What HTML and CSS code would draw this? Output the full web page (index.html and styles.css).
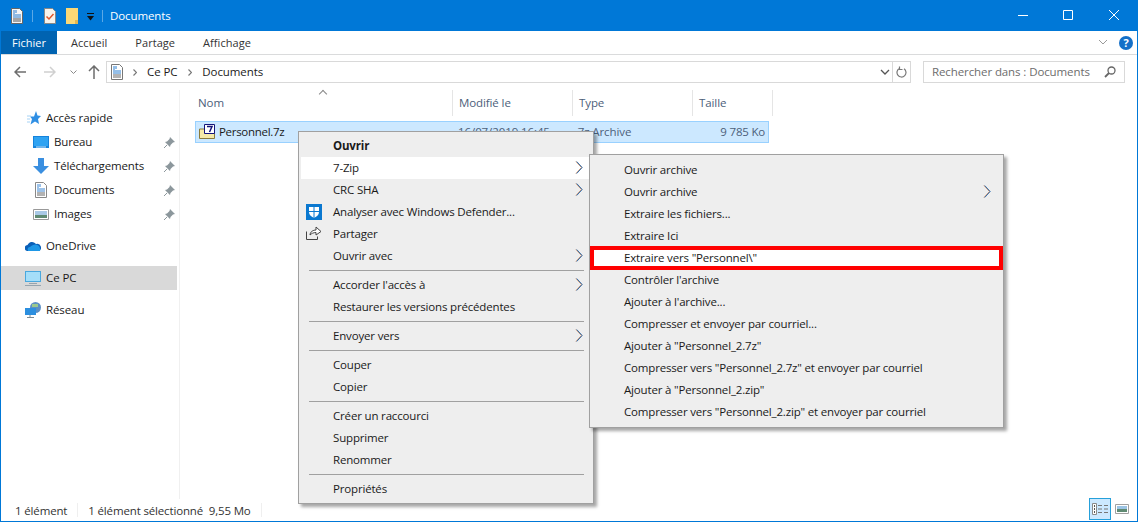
FILE: index.html
```html
<!DOCTYPE html>
<html lang="fr">
<head>
<meta charset="utf-8">
<title>Documents</title>
<link rel="stylesheet" href="styles.css">
</head>
<body>
<svg class="defs" width="0" height="0">
  <symbol id="chev" viewBox="0 0 8 13"><path d="M1 .5L6.500 6.500 1 12.500" fill="none" stroke="#d08a5c"/><path d="M1.700 .5L7.200 6.500 1.700 12.500" fill="none" stroke="#2f6fb0"/></symbol>
  <symbol id="pin" viewBox="0 0 11 11"><path d="M6 0l5 5-2 .5L6.500 8l-.5 2L1 5l2-.5L5.500 2z" fill="#8c979c"/><path d="M3 8L0 11" stroke="#8c979c"/></symbol>
</svg>
<div class="window">
  <header class="titlebar">
    <svg class="qa-doc" width="12" height="16" viewBox="0 0 12 16"><path d="M.5.500h8l3 3v12H.500z" fill="#f6f6f6" stroke="#666"/><path d="M2 3h2M5 2v3M2 5h2" stroke="#2a7fd0"/><path d="M2 7h8M2 9h8" stroke="#2a7fd0"/><path d="M2 11h8M2 13h8" stroke="#555"/></svg>
    <span class="qa-sep"></span>
    <svg class="qa-check" width="12" height="16" viewBox="0 0 12 16"><path d="M.5.500h8l3 3v12H.500z" fill="#f7f3ec" stroke="#888"/><path d="M2.500 8.500l2.500 2.500 4.500-5" fill="none" stroke="#e0562c" stroke-width="1.500"/></svg>
    <svg class="qa-folder" width="12" height="16" viewBox="0 0 12 16"><path d="M0 0h12v16H0z" fill="#fbd876"/><path d="M9 12h3v4H9z" fill="#e3b650"/></svg>
    <svg class="qa-caret" width="7" height="8" viewBox="0 0 7 8"><path d="M0 0h7v1H0z" fill="#111"/><path d="M0 3h7L3.500 7.500z" fill="#111"/></svg>
    <span class="qa-sep qa-sep-last"></span>
    <span class="title">Documents</span>
    <div class="winctl">
      <svg width="46" height="31" viewBox="0 0 46 31"><path d="M19 15.500h10" stroke="#fff"/></svg>
      <svg width="46" height="31" viewBox="0 0 46 31"><path d="M18.500 10.500h9v9h-9z" fill="none" stroke="#fff"/></svg>
      <svg width="46" height="31" viewBox="0 0 46 31"><path d="M18 10l10 10M28 10L18 20" stroke="#fff"/></svg>
    </div>
  </header>
  <nav class="ribbon">
    <span class="tab tab-file">Fichier</span>
    <span class="tab">Accueil</span>
    <span class="tab">Partage</span>
    <span class="tab">Affichage</span>
    <svg class="ribbon-chev" width="10" height="7" viewBox="0 0 10 7"><path d="M1 1l4 4 4-4" fill="none" stroke="#9a9a9a"/></svg>
    <span class="help">?</span>
  </nav>
  <div class="navbar">
    <svg width="12" height="12" viewBox="0 0 12 12"><path d="M6 1L1 6l5 5M1 6h11" fill="none" stroke="#6d6d6d" stroke-width="1.500"/></svg>
    <svg class="nav-fwd" width="12" height="12" viewBox="0 0 12 12"><path d="M6 1l5 5-5 5M11 6H0" fill="none" stroke="#d0d0d0" stroke-width="1.500"/></svg>
    <svg class="nav-down" width="7" height="5" viewBox="0 0 7 5"><path d="M.5 .5l3 3 3-3" fill="none" stroke="#8a8a8a"/></svg>
    <svg class="nav-up" width="12" height="14" viewBox="0 0 12 14"><path d="M1 6l5-5 5 5M6 1v13" fill="none" stroke="#6d6d6d" stroke-width="1.500"/></svg>
    <div class="address">
      <svg class="addr-doc" width="12" height="16" viewBox="0 0 12 16"><path d="M.5.500h8l3 3v12H.500z" fill="#fff" stroke="#777"/><path d="M2 3h2M5 2v3M2 5h2M2 7h8M2 9h8" stroke="#2a7fd0"/><path d="M2 11h8M2 13h8" stroke="#666"/></svg>
      <svg class="crumb-sep" width="4" height="7" viewBox="0 0 4 7"><path d="M.5 .5l3 3-3 3" fill="none" stroke="#777" stroke-width="1.200"/></svg>
      <span class="crumb">Ce PC</span>
      <svg class="crumb-sep" width="4" height="7" viewBox="0 0 4 7"><path d="M.5 .5l3 3-3 3" fill="none" stroke="#777" stroke-width="1.200"/></svg>
      <span class="crumb">Documents</span>
      <svg class="addr-down" width="10" height="6" viewBox="0 0 10 6"><path d="M1 1l4 4 4-4" fill="none" stroke="#555" stroke-width="1.300"/></svg>
      <span class="addr-refresh"><svg width="11" height="13" viewBox="0 0 11 13"><path d="M3.500 2.500a4.500 4.500 0 1 0 4.500 .3M3.500 .5v3h3" fill="none" stroke="#777" stroke-width="1.200"/></svg></span>
    </div>
    <div class="search">
      <span class="search-label">Rechercher dans : Documents</span>
      <svg width="12" height="12" viewBox="0 0 12 12"><circle cx="7.500" cy="4.500" r="3.500" fill="none" stroke="#666" stroke-width="1.300"/><path d="M5 7l-4 4" stroke="#666" stroke-width="1.800"/></svg>
    </div>
  </div>
  <div class="main">
    <aside class="sidebar">
      <div class="side-group">
        <div class="side-row"><svg class="ic-top" width="14" height="14" viewBox="0 0 14 14"><path d="M9 0l1.500 4.500L14 5l-3 3 1 5-4-2.500L3.500 13.500 5 8 3 5.500h4z" fill="#2f8fe4"/><path d="M0 5h4M0 8h3M0 11h3" stroke="#a5d2f5"/></svg><span class="side-label">Accès rapide</span></div>
        <div class="side-row side-sub"><svg class="ic-sub" width="16" height="12" viewBox="0 0 16 12"><path d="M0 0h16v12H0z" fill="#1583dc"/><path d="M1 1h14v9H1z" fill="#2fa3f2"/><path d="M3 11h10" stroke="#cfe8fb"/></svg><span class="side-label">Bureau</span><svg class="pin" width="11" height="11"><use href="#pin"/></svg></div>
        <div class="side-row side-sub"><svg class="ic-sub" width="16" height="16" viewBox="0 0 16 16"><path d="M5 0h6v8h5l-8 8-8-8h5z" fill="#3a8fe0"/></svg><span class="side-label">Téléchargements</span><svg class="pin" width="11" height="11"><use href="#pin"/></svg></div>
        <div class="side-row side-sub"><svg class="ic-sub" width="16" height="16" viewBox="0 0 16 16"><path d="M2.500.500h8l3 3v12h-11z" fill="#fff" stroke="#888"/><path d="M4 3h2M7 2v3M4 5h2M4 7h8M4 9h8" stroke="#3a86d4"/><path d="M4 11h8M4 13h8" stroke="#666"/></svg><span class="side-label">Documents</span><svg class="pin" width="11" height="11"><use href="#pin"/></svg></div>
        <div class="side-row side-sub"><svg class="ic-sub" width="16" height="11" viewBox="0 0 16 11"><path d="M.5.500h15v10H.500z" fill="#fff" stroke="#999"/><path d="M2 2h12v4H2z" fill="#a9c9e6"/><path d="M2 6h12v3H2z" fill="#5f8a72"/></svg><span class="side-label">Images</span><svg class="pin" width="11" height="11"><use href="#pin"/></svg></div>
      </div>
      <div class="side-group">
        <div class="side-row side-root"><svg class="ic-root" width="16" height="10" viewBox="0 0 16 10"><path d="M3 10a3 3 0 0 1-.5-6A5 5 0 0 1 11 3a3.500 3.500 0 0 1 2.500 7z" fill="#0a5fb8"/><path d="M3 10c-1-2 0-4 2-4 2-2 5-3 7-2 1 0 4 2 3 6z" fill="#1e97e6"/></svg><span class="side-label">OneDrive</span></div>
      </div>
      <div class="side-group">
        <div class="side-row side-root side-active"><svg class="ic-root" width="16" height="15" viewBox="0 0 16 15"><path d="M0 0h16v11H0z" fill="#4aa8de"/><path d="M1 1h14v9H1z" fill="#a5def9"/><path d="M4 12.500h8M0 14.500h16" stroke="#97a4ae"/></svg><span class="side-label">Ce PC</span></div>
      </div>
      <div class="side-group">
        <div class="side-row side-root"><svg class="ic-root" width="16" height="16" viewBox="0 0 16 16"><circle cx="10.500" cy="5.500" r="5.500" fill="#5c8fc4"/><path d="M7 2h6v3H7z" fill="#9bc98c"/><path d="M0 6h11v7H0z" fill="#2c8fdf"/><path d="M5 13v2M2 15.500h7" stroke="#7c8a94"/></svg><span class="side-label">Réseau</span></div>
      </div>
    </aside>
    <section class="content">
      <div class="col-head">
        <span class="caret"></span>
        <span class="col col-name">Nom</span>
        <span class="col col-date">Modifié le</span>
        <span class="col col-type">Type</span>
        <span class="col col-size">Taille</span>
      </div>
      <div class="file-row">
        <span class="cell col-name file-name"><svg width="16" height="15" viewBox="0 0 16 15"><path d="M.5 5h15v9.500H.500z" fill="#f5e9a8" stroke="#8a7a3a"/><path d="M5.500.5h10v9h-10z" fill="#fff" stroke="#14147a"/><path d="M8 2.500h5L10.500 8" fill="none" stroke="#14147a" stroke-width="1.500"/></svg><span class="file-label">Personnel.7z</span></span>
        <span class="cell col-date">16/07/2019 16:45</span>
        <span class="cell col-type">7z Archive</span>
        <span class="cell col-size size-right">9 785 Ko</span>
      </div>
    </section>
  </div>
  <footer class="status">
    <span class="status-text">1 élément</span>
    <span class="status-sep"></span>
    <span class="status-text">1 élément sélectionné&nbsp; 9,55 Mo</span>
    <span class="status-sep"></span>
    <div class="views">
      <span class="view view-on"><svg width="16" height="12" viewBox="0 0 16 12"><path d="M.5 .5h4v11h-4z" fill="#fff" stroke="#8a8a8a"/><path d="M2 3h1M2 6h1M2 9h1" stroke="#555" stroke-width="2"/><path d="M6 2.500h4M12 2.500h4M6 6h4M12 6h4M6 9.500h4M12 9.500h4" stroke="#777"/></svg></span>
      <span class="view"><svg width="14" height="10" viewBox="0 0 14 10"><path d="M.5 .5h13v9H.500z" fill="#fff" stroke="#a0a0a0"/><path d="M2 2h10v3H2z" fill="#9cc4e4"/><path d="M2 5h10v3H2z" fill="#5f8a72"/></svg></span>
    </div>
  </footer>
</div>

<div class="menu menu-main">
  <div class="item item-bold">Ouvrir</div>
  <div class="item item-hover">7-Zip<svg class="chev" width="8" height="13"><use href="#chev"/></svg></div>
  <div class="item">CRC SHA<svg class="chev" width="8" height="13"><use href="#chev"/></svg></div>
  <div class="item"><svg class="item-ic" width="16" height="16" viewBox="0 0 16 16"><path d="M0 0h16v16H0z" fill="#0a78d0"/><path d="M3 3h10v5c0 3-2 4.500-5 6-3-1.500-5-3-5-6z" fill="#fff"/><path d="M8 3v11M3 7.500h10" stroke="#0a78d0"/></svg>Analyser avec Windows Defender...</div>
  <div class="item"><svg class="item-ic" width="16" height="14" viewBox="0 0 16 14"><path d="M.5 5.500v8h11v-3" fill="none" stroke="#444"/><path d="M4 9c0-3 3-5 6-5V1l5 4.500L10 9V6.500C7.500 6.500 5.500 7.500 4 9z" fill="#fff" stroke="#444"/></svg>Partager</div>
  <div class="item">Ouvrir avec<svg class="chev" width="8" height="13"><use href="#chev"/></svg></div>
  <div class="sep"></div>
  <div class="item">Accorder l'accès à<svg class="chev" width="8" height="13"><use href="#chev"/></svg></div>
  <div class="item">Restaurer les versions précédentes</div>
  <div class="sep"></div>
  <div class="item">Envoyer vers<svg class="chev" width="8" height="13"><use href="#chev"/></svg></div>
  <div class="sep"></div>
  <div class="item">Couper</div>
  <div class="item">Copier</div>
  <div class="sep"></div>
  <div class="item">Créer un raccourci</div>
  <div class="item">Supprimer</div>
  <div class="item">Renommer</div>
  <div class="sep"></div>
  <div class="item">Propriétés</div>
</div>

<div class="menu menu-sub">
  <div class="item">Ouvrir archive</div>
  <div class="item">Ouvrir archive<svg class="chev" width="8" height="13"><use href="#chev"/></svg></div>
  <div class="item">Extraire les fichiers...</div>
  <div class="item">Extraire Ici</div>
  <div class="item item-hl">Extraire vers "Personnel\"</div>
  <div class="item">Contrôler l'archive</div>
  <div class="item">Ajouter à l'archive...</div>
  <div class="item">Compresser et envoyer par courriel...</div>
  <div class="item">Ajouter à "Personnel_2.7z"</div>
  <div class="item">Compresser vers "Personnel_2.7z" et envoyer par courriel</div>
  <div class="item">Ajouter à "Personnel_2.zip"</div>
  <div class="item">Compresser vers "Personnel_2.zip" et envoyer par courriel</div>
</div>
```

FILE: styles.css
```css
* { box-sizing: border-box; }
html, body { margin: 0; height: 100%; overflow: hidden; }
body {
  position: relative;
  font-family: "Open Sans", "Noto Sans", sans-serif;
  font-size: 11.5px;
  letter-spacing: -0.1px;
  color: #1a1a1a;
  background: #fff;
}
svg { flex: none; display: block; }
.defs { position: absolute; }

.window {
  width: 1138px;
  height: 522px;
  display: flex;
  flex-direction: column;
  border: 1px solid #0078d7;
  border-top: 0;
}

.titlebar {
  height: 31px;
  background: #0078d7;
  display: flex;
  align-items: center;
  padding-left: 10px;
  color: #fff;
}
.qa-sep { width: 1px; height: 12px; background: #5aa8e6; margin: 0 11px 0 9px; }
.qa-folder { margin-left: 10px; }
.qa-caret { margin-left: 9px; margin-top: 2px; }
.qa-sep-last { margin: 0 7px 0 8px; }
.title { font-size: 11.5px; }
.winctl { margin-left: auto; display: flex; }

.ribbon {
  height: 24px;
  display: flex;
  align-items: center;
  border-bottom: 1px solid #dadbdc;
  color: #333;
}
.tab { height: 23px; padding: 0 14px; line-height: 24px; font-size: 11px; letter-spacing: 0.05px; }
.tab-file { width: 56px; padding: 0; text-align: center; background: #0063b1; color: #fff; letter-spacing: 0; }
.ribbon-chev { margin-left: auto; margin-right: 11px; }
.help {
  width: 14px;
  height: 14px;
  border-radius: 50%;
  background: #1470c8;
  color: #fff;
  font-size: 11px;
  font-weight: 700;
  line-height: 14px;
  text-align: center;
  margin-right: 4px;
}

.navbar {
  height: 35px;
  display: flex;
  align-items: center;
  padding: 0 12px 1px 13px;
}
.nav-fwd { margin-left: 18px; }
.nav-down { margin-left: 14px; }
.nav-up { margin-left: 11px; }
.address {
  width: 805px;
  height: 22px;
  margin-left: 6px;
  border: 1px solid #d9d9d9;
  display: flex;
  align-items: center;
  padding-left: 4px;
  color: #1a1a1a;
}
.crumb { padding-bottom: 2px; }
.crumb-sep { margin: 0 10px 0 11px; }
.addr-doc + .crumb-sep { margin-left: 10px; }
.addr-down { margin-left: auto; margin-right: 2px; }
.addr-refresh {
  width: 18px;
  height: 20px;
  border-left: 1px solid #d9d9d9;
  display: flex;
  align-items: center;
  justify-content: center;
}
.search {
  width: 202px;
  height: 22px;
  margin-left: 12px;
  border: 1px solid #d9d9d9;
  display: flex;
  align-items: center;
  justify-content: space-between;
  padding: 0 8px 0 8px;
  color: #6d6d6d;
}
.search-label { padding-bottom: 2px; }

.main { flex: 1; display: flex; min-height: 0; }
.sidebar {
  width: 179px;
  padding-top: 16px;
  border-right: 1px solid #f0f0f0;
  display: flex;
  flex-direction: column;
  gap: 8px;
}
.side-row {
  height: 24px;
  width: 176px;
  display: flex;
  align-items: center;
  padding-left: 26px;
  color: #1a1a1a;
}
.side-label { padding-bottom: 2px; }
.side-root { padding-left: 24px; }
.side-sub { padding-left: 32px; letter-spacing: -0.15px; }
.side-active { background: #d9d9d9; }
.ic-top { margin-right: 5px; }
.ic-sub { margin-right: 5px; }
.ic-root { margin-right: 5px; }
.pin { margin-left: auto; margin-right: 2px; }

.content { flex: 1; min-width: 0; position: relative; }
.col-head { height: 26px; display: flex; padding-left: 11px; color: #4c607a; position: relative; }
.caret {
  position: absolute;
  left: 140px;
  top: 1px;
  width: 6px;
  height: 6px;
  border-left: 1px solid #888;
  border-top: 1px solid #888;
  transform: rotate(45deg);
}
.col { border-right: 1px solid #e5e5e5; padding-left: 6px; line-height: 26px; }
.col-name { width: 262px; padding-left: 7px; }
.col-date { width: 120px; }
.col-type { width: 120px; }
.col-size { width: 80px; }
.file-row {
  margin: 5px 0 0 15px;
  width: 574px;
  height: 22px;
  background: #cce8ff;
  border: 1px solid #99d1ff;
  display: flex;
  align-items: center;
}
.cell { padding-left: 6px; padding-bottom: 2px; white-space: nowrap; }
.file-row .col-name { width: 257px; padding-left: 3px; display: flex; align-items: center; gap: 4px; }
.file-label { letter-spacing: -0.3px; }
.file-row .col-date { color: #4c607a; }
.file-row .col-type { color: #4c607a; }
.size-right { color: #4c607a; text-align: right; padding-right: 3px; width: 77px; letter-spacing: -0.2px; }

.status {
  height: 22px;
  display: flex;
  align-items: center;
  padding-left: 14px;
  color: #333;
}
.status-text { letter-spacing: -0.15px; }
.status-sep { width: 1px; height: 14px; background: #efefef; margin: 0 10px; }
.views { margin-left: auto; display: flex; align-items: flex-start; align-self: flex-start; margin-right: 4px; margin-top: -1px; }
.view { width: 22px; height: 22px; display: flex; align-items: center; justify-content: center; }
.view-on { background: #cce8ff; border: 1px solid #26a0da; }

.menu {
  position: absolute;
  background: #eeeeee;
  border: 1px solid #a0a0a0;
  box-shadow: 3px 3px 3px rgba(0, 0, 0, 0.35);
  padding: 3px 2px;
  letter-spacing: -0.17px;
}
.menu-main { left: 298px; top: 131px; width: 296px; height: 373px; }
.menu-sub { left: 589px; top: 154px; width: 415px; height: 274px; padding-top: 4px; }
.item {
  height: 22px;
  line-height: 22px;
  padding-left: 32px;
  position: relative;
  white-space: nowrap;
  color: #1a1a1a;
}
.item-bold { font-weight: 700; }
.item-hover { background: #fff; }
.item-ic { position: absolute; left: 5px; top: 3px; }
.sep { height: 7px; position: relative; }
.sep::after {
  content: "";
  position: absolute;
  left: 8px;
  right: 7px;
  top: 3px;
  height: 1px;
  background: #a0a0a0;
}
.chev { position: absolute; right: 10px; top: 4px; }
.menu-main .chev { right: 8px; }
.item-hl { outline: 4px solid #ff0000; outline-offset: -3px; background: #fff; margin: 0 -1px; padding-left: 33px; }
```
